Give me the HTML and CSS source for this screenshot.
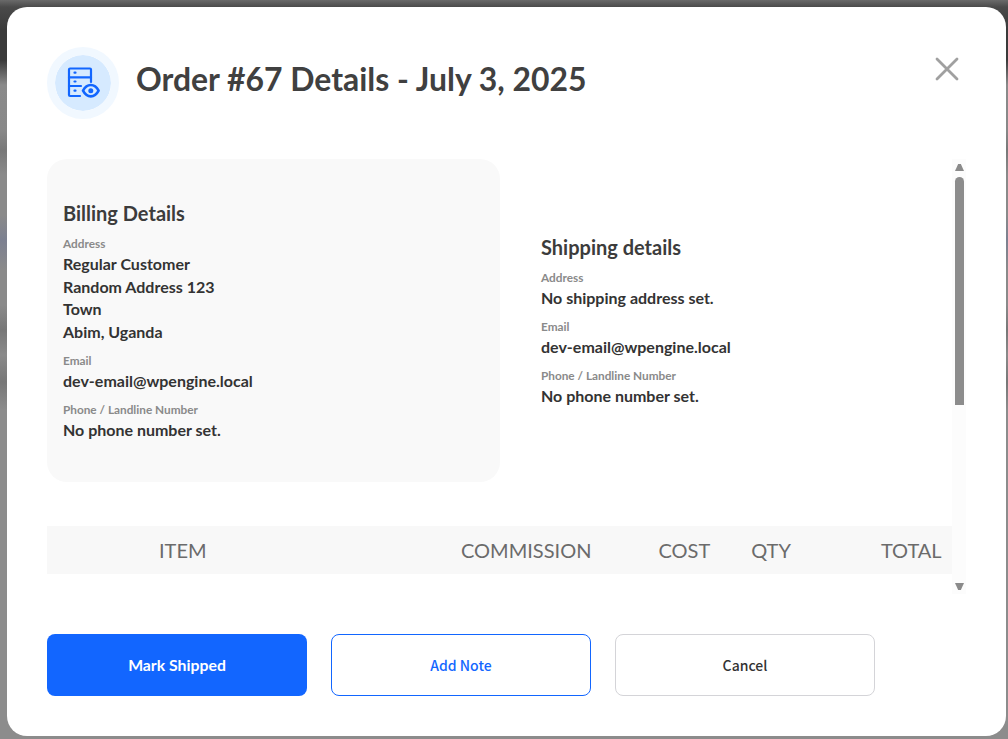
FILE: index.html
```html
<!DOCTYPE html>
<html lang="en">
<head>
	<meta charset="UTF-8">
	<title>Order Details</title>
	<link rel="stylesheet" href="styles.css">
</head>
<body>
	<section class="modal">
		<header class="modal-head">
			<div class="head-icon">
				<svg width="36" height="36" viewBox="0 0 36 36" fill="none" stroke="#1266ff" stroke-width="2.200" stroke-linejoin="round" stroke-linecap="round">
					<path d="M15 31H5a1 1 0 0 1-1-1V4.500a1 1 0 0 1 1-1h20a1 1 0 0 1 1 1V17"/>
					<path d="M4 12.300h22M4 21h12"/>
					<path d="M9.500 7.700h1M9.500 16.500h1M9.500 25.700h1"/>
					<path d="M18 25.700c2-3.800 5-5.700 7.800-5.700s5.800 1.900 7.800 5.700c-2 3.800-5 5.700-7.800 5.700s-5.800-1.900-7.800-5.700z" stroke-width="2.600"/>
					<circle cx="25.800" cy="25.700" r="2.500" fill="#1266ff" stroke="none"/>
				</svg>
			</div>
			<h1>Order #67 Details - July 3, 2025</h1>
			<a class="close" href="#">
				<svg width="24" height="24" viewBox="0 0 24 24" stroke="#a0a0a0" stroke-width="2.800" stroke-linecap="round">
					<path d="M2 2l20 20M22 2L2 22"/>
				</svg>
			</a>
		</header>

		<div class="modal-body">
			<div class="scroll-content">
				<div class="addresses">
					<div class="address billing">
						<h2>Billing Details</h2>
						<label>Address</label>
						<p>Regular Customer<br>Random Address 123<br>Town<br>Abim, Uganda</p>
						<label>Email</label>
						<p>dev-email@wpengine.local</p>
						<label>Phone / Landline Number</label>
						<p>No phone number set.</p>
					</div>
					<div class="address shipping">
						<h2>Shipping details</h2>
						<label>Address</label>
						<p>No shipping address set.</p>
						<label>Email</label>
						<p>dev-email@wpengine.local</p>
						<label>Phone / Landline Number</label>
						<p>No phone number set.</p>
					</div>
				</div>
				<div class="items-head">
					<span class="col-item">ITEM</span>
					<span class="col-commission">COMMISSION</span>
					<span class="col-cost">COST</span>
					<span class="col-qty">QTY</span>
					<span class="col-total">TOTAL</span>
				</div>
			</div>
			<div class="scrollbar">
				<span class="arrow-up"></span>
				<div class="track"><div class="thumb"></div></div>
				<span class="arrow-down"></span>
			</div>
		</div>

		<footer class="modal-foot">
			<a class="btn btn-primary" href="#">Mark Shipped</a>
			<a class="btn btn-outline" href="#">Add Note</a>
			<a class="btn btn-plain" href="#">Cancel</a>
		</footer>
	</section>
</body>
</html>
```

FILE: styles.css
```css
* {
	box-sizing: border-box;
}
html, body {
	height: 100%;
}
body {
	margin: 0;
	padding: 7px 2px 3px 7px;
	overflow: hidden;
	background: linear-gradient(#6a6a6a 0, #4a4a4a 7px, #3a3a3a 30px, #3a3a3a 60px, #8a8a8a 85px, #888 130px, #787878 150px, #8a8a8a 175px, #8a8a8a 215px, #7c8090 240px, #8a8a8a 270px, #8a8a8a 305px, #777 330px, #8a8a8a 355px, #777 382px, #8c8c8c 410px);
	font-family: Lato, "Liberation Sans", sans-serif;
	color: #333;
}
.modal {
	height: 729px;
	background: #fff;
	border-radius: 20px;
	padding: 40px 40px 0;
	display: flex;
	flex-direction: column;
}
.modal-head {
	display: flex;
	align-items: center;
	height: 72px;
}
.head-icon {
	width: 72px;
	height: 72px;
	flex: none;
	border-radius: 50%;
	background: #d6eaff;
	border: 8px solid #f1f8ff;
	background-clip: padding-box;
	display: flex;
	align-items: center;
	justify-content: center;
}
.modal-head h1 {
	margin: 0 0 8px 17px;
	font-size: 31.900px;
	font-weight: 700;
	line-height: 40px;
	color: #404040;
}
.close {
	margin-left: auto;
	margin-right: 7px;
	margin-top: -28px;
	line-height: 0;
}
.modal-body {
	display: flex;
	margin-top: 40px;
	height: 435px;
}
.scroll-content {
	width: 905px;
	flex: none;
}
.addresses {
	display: flex;
	align-items: center;
}
.address {
	padding: 40px 16px;
	border-radius: 20px;
}
.billing {
	flex: none;
	width: 453px;
	background: #f9f9f9;
	height: 323px;
}
.shipping {
	flex: 1;
	padding-left: 41px;
}
.address h2 {
	margin: 0 0 8px;
	font-size: 20px;
	font-weight: 700;
	line-height: 29px;
	color: #3c3c3c;
}
.address label {
	display: block;
	font-size: 11.800px;
	line-height: 15px;
	color: #8a8a8a;
	font-weight: 700;
}
.address p {
	margin: 2px 0 9.500px;
	font-size: 16px;
	line-height: 22.500px;
	font-weight: 700;
	color: #333;
}
.address p:last-child {
	margin-bottom: 0;
}
.items-head {
	display: flex;
	align-items: center;
	height: 48px;
	margin-top: 44px;
	background: #f8f8f8;
	font-size: 20px;
	color: #6b6b6b;
}
.items-head span {
	display: block;
}
.col-item {
	margin-left: 112px;
}
.col-commission {
	margin-left: 254.500px;
}
.col-cost {
	margin-left: 67px;
}
.col-qty {
	margin-left: 41px;
}
.col-total {
	margin-left: 90px;
}
.scrollbar {
	width: 14px;
	background: #fcfcfc;
	display: flex;
	flex-direction: column;
	align-items: center;
}
.arrow-up, .arrow-down {
	width: 9px;
	height: 7px;
	flex: none;
	margin-left: 1px;
	background: #8a8a8a;
}
.arrow-up {
	margin-top: 5px;
	clip-path: polygon(35% 0, 65% 0, 100% 100%, 0 100%);
}
.arrow-down {
	margin-bottom: 4px;
	clip-path: polygon(0 0, 100% 0, 65% 100%, 35% 100%);
}
.track {
	flex: 1;
	width: 100%;
	padding: 6px 2px 6px 3px;
}
.thumb {
	height: 228px;
	background: #8c8c8c;
	border-radius: 5px 5px 0 0;
}
.modal-foot {
	display: flex;
	gap: 24px;
	margin-top: 40px;
}
.btn {
	display: flex;
	align-items: center;
	justify-content: center;
	width: 260px;
	height: 62px;
	border-radius: 8px;
	font-size: 14px;
	font-family: "Noto Sans CJK SC", sans-serif;
	font-weight: 500;
	text-decoration: none;
}
.btn-primary {
	background: #1266ff;
	color: #fff;
	font-family: Lato, sans-serif;
	font-size: 15.800px;
	font-weight: 700;
	padding-bottom: 2px;
}
.btn-outline {
	border: 1px solid #1266ff;
	color: #1266ff;
}
.btn-plain {
	border: 1px solid #d4d4d8;
	color: #333;
}
```
